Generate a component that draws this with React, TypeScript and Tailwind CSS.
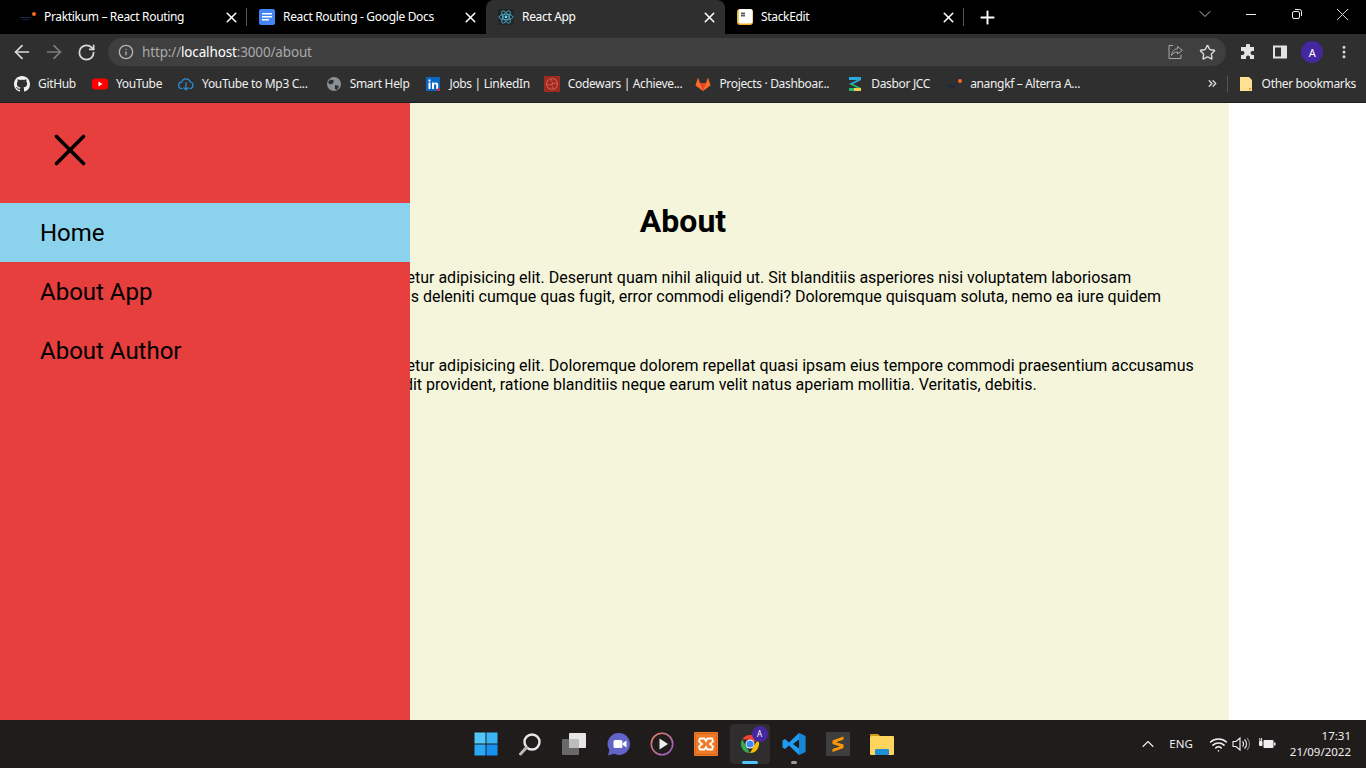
import React from "react";
import { ArrowLeft, ArrowRight, ChevronDown, ChevronUp, ChevronsRight, Info, MoreVertical, Plus, RotateCw, Star, Wifi, X } from "lucide-react";

const chromeFont = "font-['Noto_Sans',sans-serif] tracking-[-0.33px]";

function PraktikumIcon() {
  return (
    <svg width="16" height="16" viewBox="0 0 16 16">
      <rect x="0" y="8" width="11" height="1" fill="#1c2b4d" />
      <rect x="2" y="10" width="7" height="1" fill="#15203a" />
      <circle cx="14" cy="5" r="2" fill="#f26b21" />
    </svg>
  );
}

function DocsIcon() {
  return (
    <svg width="16" height="16" viewBox="0 0 16 16">
      <rect width="16" height="16" rx="2" fill="#4285f4" />
      <rect x="3" y="4" width="10" height="1.5" fill="#fff" />
      <rect x="3" y="7" width="10" height="1.5" fill="#fff" />
      <rect x="3" y="10" width="7" height="1.5" fill="#fff" />
    </svg>
  );
}

function ReactIcon() {
  return (
    <svg width="16" height="16" viewBox="0 0 16 16">
      <rect width="16" height="16" rx="1" fill="#20262a" />
      <g fill="none" stroke="#61dafb" strokeWidth="0.8" opacity="0.8">
        <ellipse cx="8" cy="8" rx="7" ry="2.8" />
        <ellipse cx="8" cy="8" rx="7" ry="2.8" transform="rotate(60 8 8)" />
        <ellipse cx="8" cy="8" rx="7" ry="2.8" transform="rotate(120 8 8)" />
      </g>
      <circle cx="8" cy="8" r="1.4" fill="#61dafb" />
    </svg>
  );
}

function StackEditIcon() {
  return (
    <svg width="16" height="16" viewBox="0 0 16 16">
      <rect width="16" height="16" rx="3" fill="#f9a825" />
      <rect x="1.5" y="0" width="14" height="14.5" rx="2" fill="#fff" />
      <rect x="0" y="2" width="1.5" height="11" fill="#d6c12b" />
      <path d="M4 4.5h4M4 6.5h4M5 3v5M7 3v5" stroke="#444" strokeWidth="0.8" />
    </svg>
  );
}

function Tab(props: { title: string; icon: React.ReactNode; active?: boolean; sep?: boolean }) {
  return (
    <div className={`relative flex h-[34px] w-[239px] flex-none items-center pl-[12px] pr-[7px] ${props.active ? "rounded-t-[8px] bg-[#2f2f2f]" : ""}`}>
      {props.icon}
      <span className="ml-[8px] flex-1 truncate text-[12px] text-white">{props.title}</span>
      <X size={17} strokeWidth={2.2} className="text-white" />
      {props.sep && <div className="absolute right-0 top-[8px] h-[18px] w-px bg-[#555]" />}
    </div>
  );
}

function Bookmark(props: { icon: React.ReactNode; label: string; className?: string }) {
  return (
    <div className={`flex flex-none items-center gap-[8px] ${props.className ?? ""}`}>
      <span className="flex h-[16px] w-[16px] items-center justify-center">{props.icon}</span>
      <span className="text-[12px] leading-none text-[#f0f0f0]">{props.label}</span>
    </div>
  );
}

function TaskIcon(props: { children: React.ReactNode; active?: boolean; dot?: boolean }) {
  return (
    <div className={`relative flex h-[40px] w-[40px] flex-none items-center justify-center rounded-[4px] ${props.active ? "bg-[#2f2d2d]" : ""}`}>
      {props.children}
      {props.active && <div className="absolute bottom-0 h-[3px] w-[16px] rounded-full bg-[#4cc2ff]" />}
      {props.dot && <div className="absolute bottom-0 h-[3px] w-[6px] rounded-full bg-[#9d9d9d]" />}
    </div>
  );
}

function Taskbar() {
  return (
    <div className="relative flex h-[48px] flex-none items-center justify-center bg-[#201c1c] font-['Noto_Sans',sans-serif]">
      <div className="ml-[1px] flex items-center gap-[4px]">
        <TaskIcon>
          <svg width="24" height="24" viewBox="0 0 24 24">
            <rect x="0.5" y="0.5" width="11" height="11" fill="#52c7f7" />
            <rect x="12.5" y="0.5" width="11" height="11" fill="#3ab4f6" />
            <rect x="0.5" y="12.5" width="11" height="11" fill="#2aa8f5" />
            <rect x="12.5" y="12.5" width="11" height="11" fill="#1690f0" />
          </svg>
        </TaskIcon>
        <TaskIcon>
          <svg width="24" height="24" viewBox="0 0 24 24" fill="none">
            <circle cx="14" cy="10" r="7.5" stroke="#e8e8e8" strokeWidth="2.4" />
            <path d="M8.5 15.5 L2.5 22" stroke="#b9b9b9" strokeWidth="3" strokeLinecap="round" />
          </svg>
        </TaskIcon>
        <TaskIcon>
          <svg width="24" height="24" viewBox="0 0 24 24">
            <rect x="7" y="1" width="17" height="15" rx="1" fill="#e6e6e6" />
            <rect x="0" y="7" width="17" height="16" rx="1" fill="#6e6e6e" opacity="0.95" />
            <rect x="7" y="7" width="10" height="9" fill="#bdbdbd" />
          </svg>
        </TaskIcon>
        <TaskIcon>
          <svg width="24" height="24" viewBox="0 0 24 24">
            <path d="M13 1a11 11 0 1 1 -5 20.8 L2 23.5 L3.4 18 A11 11 0 0 1 13 1z" fill="#6264c7" />
            <rect x="7.5" y="8" width="9" height="8" rx="1.5" fill="#fff" />
            <path d="M17 11l3.5-2.5v7L17 13z" fill="#fff" />
          </svg>
        </TaskIcon>
        <TaskIcon>
          <svg width="24" height="24" viewBox="0 0 24 24" fill="none">
            <defs>
              <linearGradient id="pl" x1="0" y1="0" x2="1" y2="1">
                <stop offset="0" stopColor="#e8835a" />
                <stop offset="1" stopColor="#9a5bd0" />
              </linearGradient>
            </defs>
            <circle cx="12" cy="12" r="10.7" stroke="url(#pl)" strokeWidth="1.6" />
            <path d="M9.5 6.5 L18 12 L9.5 17.5z" fill="#eee" />
          </svg>
        </TaskIcon>
        <TaskIcon>
          <svg width="24" height="24" viewBox="0 0 24 24">
            <rect width="24" height="24" rx="1" fill="#f07a26" />
            <rect x="1.5" y="1.5" width="21" height="21" fill="none" stroke="#d9661c" />
            <path d="M6 6.5h4.5L12 9l1.5-2.5H18l1 3-3 2.5 3 2.5-1 3h-4.5L12 15l-1.5 2.5H6l-1-3L8 12 5 9.5z" fill="none" stroke="#fff" strokeWidth="1.8" />
          </svg>
        </TaskIcon>
        <TaskIcon active>
          <svg width="24" height="24" viewBox="0 0 24 24">
            <path d="M12 12 L12 3 A9 9 0 0 1 19.8 7.5z" fill="#ea4335" />
            <path d="M4.2 7.5 A9 9 0 0 1 12 3 L19.8 7.5 L12 7.5z" fill="#ea4335" />
            <path d="M19.8 7.5 A9 9 0 0 1 12 21 L16 14z" fill="#fbbc05" />
            <path d="M12 21 A9 9 0 0 1 4.2 7.5 L8 14z" fill="#34a853" />
            <circle cx="12" cy="12" r="4.5" fill="#fff" />
            <circle cx="12" cy="12" r="3.6" fill="#4285f4" />
          </svg>
          <div className="absolute right-[2px] top-[2px] flex h-[16px] w-[16px] items-center justify-center rounded-full bg-[#4527a0] text-[8px] leading-none text-white">A</div>
        </TaskIcon>
        <TaskIcon dot>
          <svg width="24" height="24" viewBox="0 0 24 24">
            <path d="M17 1 L23.5 4 V20 L17 23 L7 13.5 L3 17 L0.5 15.5 V8.5 L3 7 L7 10.5z M17 7.5 L11 12 L17 16.5z" fillRule="evenodd" fill="#1f9cf0" />
            <path d="M17 1 L23.5 4 V20 L17 23z" fill="#0065a9" opacity="0.35" />
          </svg>
        </TaskIcon>
        <TaskIcon>
          <svg width="24" height="24" viewBox="0 0 24 24">
            <rect width="24" height="24" rx="1" fill="#3e3e3e" />
            <path d="M17.5 4.5 L6.5 8.5 V12 L14 14.5 L6.5 17 V20 L17.5 16 V12.5 L10 10.2 L17.5 7.5z" fill="#ff9800" />
          </svg>
        </TaskIcon>
        <TaskIcon>
          <svg width="24" height="24" viewBox="0 0 24 24">
            <path d="M0 3 a1 1 0 0 1 1-1 h7 l2 2 h-10z" fill="#d39a12" />
            <rect x="0" y="4" width="24" height="19" rx="1" fill="#ffd45c" />
            <rect x="5" y="17" width="14" height="6" rx="1" fill="#1f8fd6" />
          </svg>
        </TaskIcon>
      </div>
      <div className="absolute inset-y-0 right-[15px] flex items-center text-[#f0f0f0]">
        <ChevronUp size={20} strokeWidth={1.3} className="mr-[11px]" />
        <span className="mr-[16px] text-[11.5px]">ENG</span>
        <Wifi size={19} strokeWidth={2} className="mr-[4px]" />
        <svg width="18" height="16" viewBox="0 0 18 16" fill="none" stroke="#f0f0f0" strokeWidth="1.1" className="mr-[8px]">
          <path d="M1 5.500h3L8 2v12L4 10.500H1z" />
          <path d="M10.500 5.500a3.500 3.500 0 0 1 0 5M12.500 3.500a6 6 0 0 1 0 9" />
          <path d="M15 2a8.500 8.500 0 0 1 0 12" stroke="#777" />
        </svg>
        <svg width="18" height="14" viewBox="0 0 18 14" className="mr-[14px]">
          <rect x="5.500" y="3" width="10" height="8" rx="1" fill="#f0f0f0" />
          <rect x="16" y="5.500" width="1.500" height="3" fill="#f0f0f0" />
          <rect x="1" y="4" width="3.500" height="5" rx="1" fill="#f0f0f0" />
          <path d="M1.800 1v3M3.600 1v3" stroke="#f0f0f0" strokeWidth="1" />
        </svg>
        <div className="flex flex-col items-end text-[11.5px] leading-[16px]">
          <span>17:31</span>
          <span>21/09/2022</span>
        </div>
      </div>
    </div>
  );
}

export default function App() {
  return (
    <div className="flex h-[768px] w-[1366px] flex-col overflow-hidden bg-white">
      <div className={`${chromeFont} flex-none`}>
        <div className="flex h-[34px] items-center bg-black pl-[8px]">
          <Tab title="Praktikum – React Routing" icon={<PraktikumIcon />} sep />
          <Tab title="React Routing - Google Docs" icon={<DocsIcon />} />
          <Tab title="React App" icon={<ReactIcon />} active />
          <Tab title="StackEdit" icon={<StackEditIcon />} sep />
          <Plus size={21} strokeWidth={2.2} className="ml-[13px] text-white" />
          <div className="-mt-[6px] ml-auto flex items-center text-[#ddd]">
            <ChevronDown size={20} strokeWidth={1} className="mr-[31px]" />
            <div className="mr-[36px] h-px w-[10px] bg-[#eee]" />
            <svg width="10" height="10" viewBox="0 0 10 10" fill="none" stroke="#eee" className="mr-[30px]">
              <rect x="0.5" y="2.5" width="7" height="7" rx="1.5" />
              <path d="M3 0.5h4.5a2 2 0 0 1 2 2V7" />
            </svg>
            <X size={21} strokeWidth={1.1} className="mr-[13px]" />
          </div>
        </div>
        <div className="flex h-[36px] items-center bg-[#2f2f2f]">
          <ArrowLeft size={22} strokeWidth={1.9} className="ml-[11px] text-[#dadada]" />
          <ArrowRight size={22} strokeWidth={1.9} className="ml-[10px] text-[#7c7c7c]" />
          <RotateCw size={19} strokeWidth={2.2} className="ml-[12px] text-[#dadada]" />
          <div className="ml-[12px] flex h-[28px] w-[1118px] items-center rounded-full bg-[#3f3f3f]">
            <Info size={16} className="ml-[10px] text-[#b5b5b5]" />
            <span className="ml-[8px] mt-[1px] text-[13.5px] leading-none tracking-[-0.15px] text-[#a9a9a9]">
              http://<span className="text-white">localhost</span>:3000/about
            </span>
            <svg width="16" height="16" viewBox="0 0 16 16" fill="none" stroke="#a8a8a8" className="ml-auto mr-[15px]">
              <path d="M5 1.5H1v13h12v-4" />
              <path d="M9.5 2.5l5 3.8-5 3.7V8C7 8 5 9 3.5 11.5 4 7.5 6 5 9.5 4.8z" />
            </svg>
            <Star size={17} strokeWidth={2} className="mr-[10px] text-[#dadada]" />
          </div>
          <svg width="16" height="16" viewBox="0 0 16 16" className="ml-[14px]">
            <path d="M6 1.5a2 2 0 0 1 4 0V3h4v4h-1.5a2 2 0 0 0 0 4H14v4h-4v-1.5a2 2 0 0 0-4 0V15H1v-4h1.5a2 2 0 0 0 0-4H1V3h5z" fill="#e3e3e3" />
          </svg>
          <svg width="14" height="14" viewBox="0 0 14 14" className="ml-[17px]">
            <rect width="14" height="13" y="0.5" fill="#e3e3e3" />
            <rect x="2" y="2.5" width="6" height="9" fill="#2f2f2f" />
          </svg>
          <div className="ml-[14px] flex h-[22px] w-[22px] items-center justify-center rounded-full bg-[#4527a0] text-[11px] leading-none text-white">A</div>
          <MoreVertical size={16} strokeWidth={2.5} className="ml-[13px] text-[#dadada]" />
        </div>
        <div className="flex h-[33px] items-center border-b border-[#1e1e1e] bg-[#2f2f2f] pb-[5px] pl-[14px]">
          <div className="flex items-center gap-[16px]">
            <Bookmark
              label="GitHub"
              icon={
                <svg width="16" height="16" viewBox="0 0 16 16" fill="#f0f0f0">
                  <path d="M8 0C3.58 0 0 3.58 0 8c0 3.54 2.29 6.53 5.47 7.59.4.07.55-.17.55-.38 0-.19-.01-.82-.01-1.49-2.01.37-2.53-.49-2.69-.94-.09-.23-.48-.94-.82-1.13-.28-.15-.68-.52-.01-.53.63-.01 1.08.58 1.23.82.72 1.21 1.87.87 2.33.66.07-.52.28-.87.51-1.07-1.78-.2-3.64-.89-3.64-3.95 0-.87.31-1.59.82-2.15-.08-.2-.36-1.02.08-2.12 0 0 .67-.21 2.2.82.64-.18 1.32-.27 2-.27s1.36.09 2 .27c1.53-1.04 2.2-.82 2.2-.82.44 1.1.16 1.92.08 2.12.51.56.82 1.27.82 2.15 0 3.07-1.87 3.75-3.65 3.95.29.25.54.73.54 1.48 0 1.07-.01 1.93-.01 2.2 0 .21.15.46.55.38A8 8 0 0 0 16 8c0-4.42-3.58-8-8-8z" />
                </svg>
              }
            />
            <Bookmark
              label="YouTube"
              icon={
                <svg width="16" height="16" viewBox="0 0 16 16">
                  <rect y="2.5" width="16" height="11" rx="3" fill="#f00" />
                  <path d="M6.5 5.5l4 2.5-4 2.5z" fill="#fff" />
                </svg>
              }
            />
            <Bookmark
              label="YouTube to Mp3 C..."
              icon={
                <svg width="16" height="16" viewBox="0 0 16 16" fill="none" stroke="#2b8fd6" strokeWidth="1.2">
                  <path d="M4.5 12.5H4a3.2 3.2 0 0 1-.3-6.4A4.5 4.5 0 0 1 12.3 6a3.3 3.3 0 0 1 0 6.5h-.8" />
                  <path d="M8 6.5v7.5M5.5 11.5L8 14l2.5-2.5" />
                </svg>
              }
            />
            <Bookmark
              label="Smart Help"
              className="ml-[2px]"
              icon={
                <svg width="16" height="16" viewBox="0 0 16 16">
                  <circle cx="8" cy="8" r="7" fill="#8a8f96" />
                  <path d="M4 3.5l4 1-1 3-3 1-2-2zM9 9l4 1-2 4-2-1z" fill="#2f2f2f" />
                </svg>
              }
            />
            <Bookmark
              label="Jobs | LinkedIn"
              icon={
                <svg width="16" height="16" viewBox="0 0 16 16">
                  <rect x="1" y="1" width="14" height="14" fill="#0a66c2" />
                  <path d="M3.5 6.5h2V13h-2zM3.5 3.5h2v2h-2zM7 6.5h2v1c.4-.7 1-1.1 2-1.1 1.6 0 2.2 1 2.2 2.6v4h-2V9.5c0-.8-.3-1.3-1-1.3S9 8.700 9 9.600V13H7z" fill="#fff" />
                  <circle cx="13.500" cy="13.500" r="1.500" fill="#e0252e" />
                </svg>
              }
            />
            <Bookmark
              label="Codewars | Achieve..."
              className="-ml-[2px]"
              icon={
                <svg width="16" height="16" viewBox="0 0 16 16" fill="none">
                  <rect width="16" height="16" fill="#9b2c22" />
                  <circle cx="8" cy="8" r="5.500" stroke="#d9534a" strokeWidth="1.200" />
                  <path d="M8 2.500C5 6 11 6 8 8s-5.500-1-5.500 1M8 8c3-2 5.500 1 5.500-1M8 8c-1 3 2 3 1 5.500" stroke="#d9534a" />
                </svg>
              }
            />
            <Bookmark
              label="Projects · Dashboar..."
              className="-ml-[3px]"
              icon={
                <svg width="16" height="16" viewBox="0 0 16 16">
                  <path d="M8 15L0.500 9.500 3 1.500 5 7h6l2-5.500 2.500 8z" fill="#fc6d26" />
                  <path d="M8 15L5 7h6z" fill="#e24329" />
                </svg>
              }
            />
            <Bookmark
              label="Dasbor JCC"
              className="ml-[2px]"
              icon={
                <svg width="16" height="16" viewBox="0 0 16 16">
                  <rect x="2" y="1" width="12" height="3" fill="#29abe2" />
                  <path d="M14 4L6 8H2l8-4z" fill="#29abe2" />
                  <path d="M2 8l8 4h4L6 8z" fill="#22b573" />
                  <rect x="2" y="12" width="12" height="3" fill="#f7c948" />
                  <rect x="2" y="12" width="5" height="3" fill="#22b573" />
                </svg>
              }
            />
            <Bookmark label="anangkf – Alterra A..." icon={<PraktikumIcon />} />
          </div>
          <div className="ml-auto flex items-center">
            <ChevronsRight size={13} strokeWidth={2.5} className="text-[#dadada]" />
            <div className="ml-[8px] h-[16px] w-px bg-[#555]" />
            <span className="ml-[12px] flex h-[14px] w-[12px] items-center">
              <svg width="12" height="14" viewBox="0 0 12 14">
                <path d="M0 0h9l3 3v11H0z" fill="#fde293" />
                <path d="M9 14v-3h3z" fill="#d9a93a" />
              </svg>
            </span>
            <span className="ml-[10px] mr-[10px] text-[12px] leading-none text-[#f0f0f0]">Other bookmarks</span>
          </div>
        </div>
      </div>

      <div className="relative min-h-0 flex-1 font-['Roboto',sans-serif]">
        <div className="mx-auto h-full w-[1092px] bg-[#f5f5dc] px-[32px] pt-[100px] text-black">
          <h1 className="text-center text-[32px] font-bold leading-[37px]">About</h1>
          <p className="-ml-[19px] mt-[28px] text-[16px] leading-[19px]">
            Lorem ipsum dolor sit amet consectetur adipisicing elit. Deserunt quam nihil aliquid ut. Sit blanditiis asperiores nisi voluptatem laboriosam reprehenderit voluptate sapient minus deleniti cumque quas fugit, error commodi eligendi? Doloremque quisquam soluta, nemo ea iure quidem dolorum.
          </p>
          <p className="-ml-[19px] mt-[31px] text-[16px] leading-[19px]">
            Lorem ipsum dolor sit amet consectetur adipisicing elit. Doloremque dolorem repellat quasi ipsam eius tempore commodi praesentium accusamus eligendi nulla hic, laudantium sunt odit provident, ratione blanditiis neque earum velit natus aperiam mollitia. Veritatis, debitis.
          </p>
        </div>
        <nav className="absolute inset-y-0 left-0 w-[410px] bg-[#e73e3e] text-black">
          <div className="flex h-[100px] items-center pb-[6px] pl-[43px]">
            <X size={54} strokeWidth={1.6} />
          </div>
          <div className="flex h-[59px] items-center bg-[#8bd3ec] pl-[40px] text-[24px]">Home</div>
          <div className="flex h-[59px] items-center pl-[40px] text-[24px]">About App</div>
          <div className="flex h-[59px] items-center pl-[40px] text-[24px]">About Author</div>
        </nav>
      </div>
      <Taskbar />
    </div>
  );
}
